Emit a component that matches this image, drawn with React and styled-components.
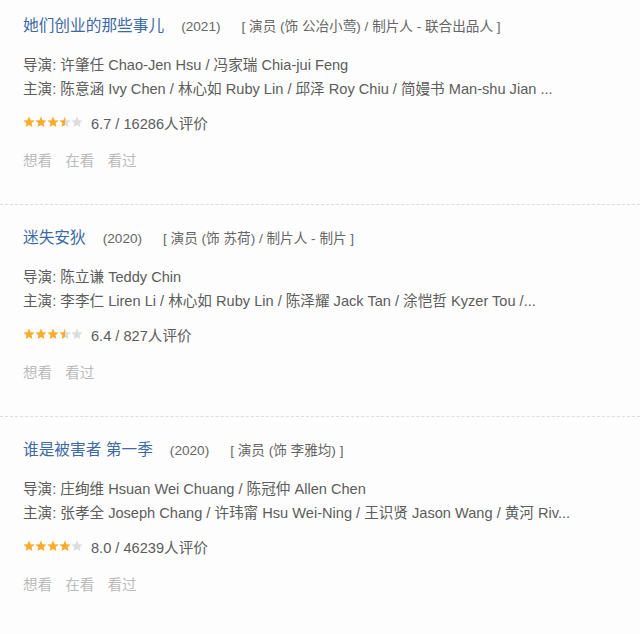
import React from 'react';
import styled, { createGlobalStyle } from 'styled-components';

const GlobalStyle = createGlobalStyle`
  html, body {
    margin: 0;
    padding: 0;
    background: #fdfdfd;
  }
  body {
    font-family: "Liberation Sans", Arial, "Noto Sans CJK SC", sans-serif;
    color: #555;
  }
`;

const works = [
  {
    title: '她们创业的那些事儿',
    year: 2021,
    roles: '[ 演员 (饰 公冶小莺) / 制片人 - 联合出品人 ]',
    director: '许肇任 Chao-Jen Hsu / 冯家瑞 Chia-jui Feng',
    cast: '陈意涵 Ivy Chen / 林心如 Ruby Lin / 邱泽 Roy Chiu / 简嫚书 Man-shu Jian ...',
    score: 6.7,
    stars: 3.5,
    votes: 16286,
    actions: ['想看', '在看', '看过'],
  },
  {
    title: '迷失安狄',
    year: 2020,
    roles: '[ 演员 (饰 苏荷) / 制片人 - 制片 ]',
    director: '陈立谦 Teddy Chin',
    cast: '李李仁 Liren Li / 林心如 Ruby Lin / 陈泽耀 Jack Tan / 涂恺哲 Kyzer Tou /...',
    score: 6.4,
    stars: 3.5,
    votes: 827,
    actions: ['想看', '看过'],
  },
  {
    title: '谁是被害者 第一季',
    year: 2020,
    roles: '[ 演员 (饰 李雅均) ]',
    director: '庄绚维 Hsuan Wei Chuang / 陈冠仲 Allen Chen',
    cast: '张孝全 Joseph Chang / 许玮甯 Hsu Wei-Ning / 王识贤 Jason Wang / 黄河 Riv...',
    score: 8.0,
    stars: 4,
    votes: 46239,
    actions: ['想看', '在看', '看过'],
  },
];

const List = styled.ul`
  list-style: none;
  margin: 0;
  padding: 0;
`;

const Item = styled.li`
  padding: 22px 0 33px 23px;
  border-bottom: 1px dashed #ddd;

  &:first-child {
    padding-top: 15px;
  }
  &:last-child {
    border-bottom: none;
  }
`;

const TitleRow = styled.div`
  display: flex;
  align-items: baseline;
  line-height: 22px;
  white-space: nowrap;
`;

const Title = styled.a`
  font-size: 15.7px;
  color: #3d6aa2;
  text-decoration: none;
`;

const Year = styled.span`
  font-size: 13.6px;
  color: #666;
  margin-left: 17px;
`;

const Roles = styled.span`
  font-size: 13.6px;
  color: #666;
  margin-left: 21px;
`;

const Info = styled.div`
  margin-top: 15px;
  font-size: 14.6px;
  line-height: 24px;
  color: #5c5c5c;
  white-space: nowrap;
`;

const RatingRow = styled.div`
  display: flex;
  align-items: center;
  height: 20px;
  margin-top: 11px;
  font-size: 14.6px;
  color: #5c5c5c;
`;

const Stars = styled.span`
  display: inline-flex;
  margin-right: 8px;
`;

const Actions = styled.div`
  display: flex;
  gap: 13px;
  margin-top: 19px;
  line-height: 20px;
  font-size: 14.6px;
  color: #bbb;
`;

const STAR = 'M6 0.6l1.6 3.6 3.9 0.4-2.9 2.6 0.8 3.9L6 9.1 2.6 11.1l0.8-3.9L0.5 4.6l3.9-0.4z';

function Star({ fill, id }) {
  return (
    <svg width="12" height="12" viewBox="0 0 12 12">
      <defs>
        <linearGradient id={id}>
          <stop offset={fill} stopColor="#fbab2b" />
          <stop offset={fill} stopColor="#dcdcdc" />
        </linearGradient>
      </defs>
      <path d={STAR} fill={`url(#${id})`} />
    </svg>
  );
}

function StarBar({ value, k }) {
  return (
    <Stars>
      {[0, 1, 2, 3, 4].map((i) => {
        const f = Math.max(0, Math.min(1, value - i));
        return <Star key={i} fill={f} id={`s${k}-${i}`} />;
      })}
    </Stars>
  );
}

export default function App() {
  return (
    <>
      <GlobalStyle />
      <List>
        {works.map((w, k) => (
          <Item key={w.title}>
            <TitleRow>
              <Title href="#">{w.title}</Title>
              <Year>({w.year})</Year>
              <Roles>{w.roles}</Roles>
            </TitleRow>
            <Info>
              <div>导演: {w.director}</div>
              <div>主演: {w.cast}</div>
            </Info>
            <RatingRow>
              <StarBar value={w.stars} k={k} />
              {w.score.toFixed(1)} / {w.votes}人评价
            </RatingRow>
            <Actions>
              {w.actions.map((a) => (
                <span key={a}>{a}</span>
              ))}
            </Actions>
          </Item>
        ))}
      </List>
    </>
  );
}
